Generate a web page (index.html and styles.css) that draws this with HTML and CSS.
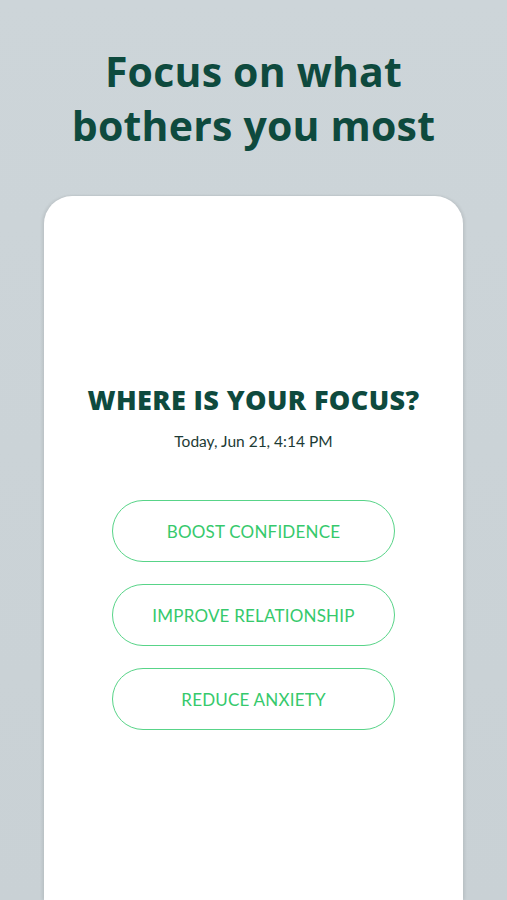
FILE: index.html
```html
<!DOCTYPE html>
<html>
<head>
<meta charset="utf-8">
<link rel="stylesheet" href="styles.css">
</head>
<body>
<div class="screen">
  <h1 class="headline">Focus on what<br>bothers you most</h1>
  <div class="card">
    <h2 class="question">WHERE IS YOUR FOCUS?</h2>
    <p class="date">Today, Jun 21, 4:14 PM</p>
    <div class="options">
      <button class="option">BOOST CONFIDENCE</button>
      <button class="option">IMPROVE RELATIONSHIP</button>
      <button class="option">REDUCE ANXIETY</button>
    </div>
  </div>
</div>
</body>
</html>
```
FILE: styles.css
```css
html, body {
  margin: 0;
  padding: 0;
}
body {
  background: #cbd3d7;
  font-family: "Lato", "Open Sans", sans-serif;
}
.screen {
  width: 507px;
  height: 900px;
  overflow: hidden;
  display: flex;
  flex-direction: column;
  align-items: center;
  background: linear-gradient(180deg, #cdd5d9 0%, #c9d1d5 100%);
}
.headline {
  margin: 44px 0 0;
  font-family: "Open Sans", sans-serif;
  font-weight: 700;
  font-size: 41px;
  line-height: 54px;
  color: #0e4a3e;
  text-align: center;
  letter-spacing: 0.2px;
}
.card {
  margin-top: 44px;
  width: 419px;
  flex: 1;
  background: #ffffff;
  border-radius: 28px 28px 0 0;
  box-shadow: -2px 0 3px rgba(0,0,0,0.08), 2px 0 3px rgba(0,0,0,0.08);
  display: flex;
  flex-direction: column;
  align-items: center;
  padding-top: 188px;
  box-sizing: border-box;
}
.question {
  margin: 0;
  font-family: "Open Sans", sans-serif;
  font-weight: 800;
  font-size: 27px;
  line-height: 32px;
  letter-spacing: 0.4px;
  color: #0e4a3e;
}
.date {
  margin: 16px 0 0;
  font-size: 15.5px;
  color: #1d3b35;
}
.options {
  margin-top: 50px;
  display: flex;
  flex-direction: column;
  gap: 22px;
}
.option {
  width: 283px;
  height: 62px;
  border: 1.5px solid #58d488;
  border-radius: 31px;
  background: #fff;
  color: #36c96c;
  font-family: "Lato", sans-serif;
  font-size: 17px;
  font-weight: 400;
  letter-spacing: 0.2px;
  padding: 0;
}
```
